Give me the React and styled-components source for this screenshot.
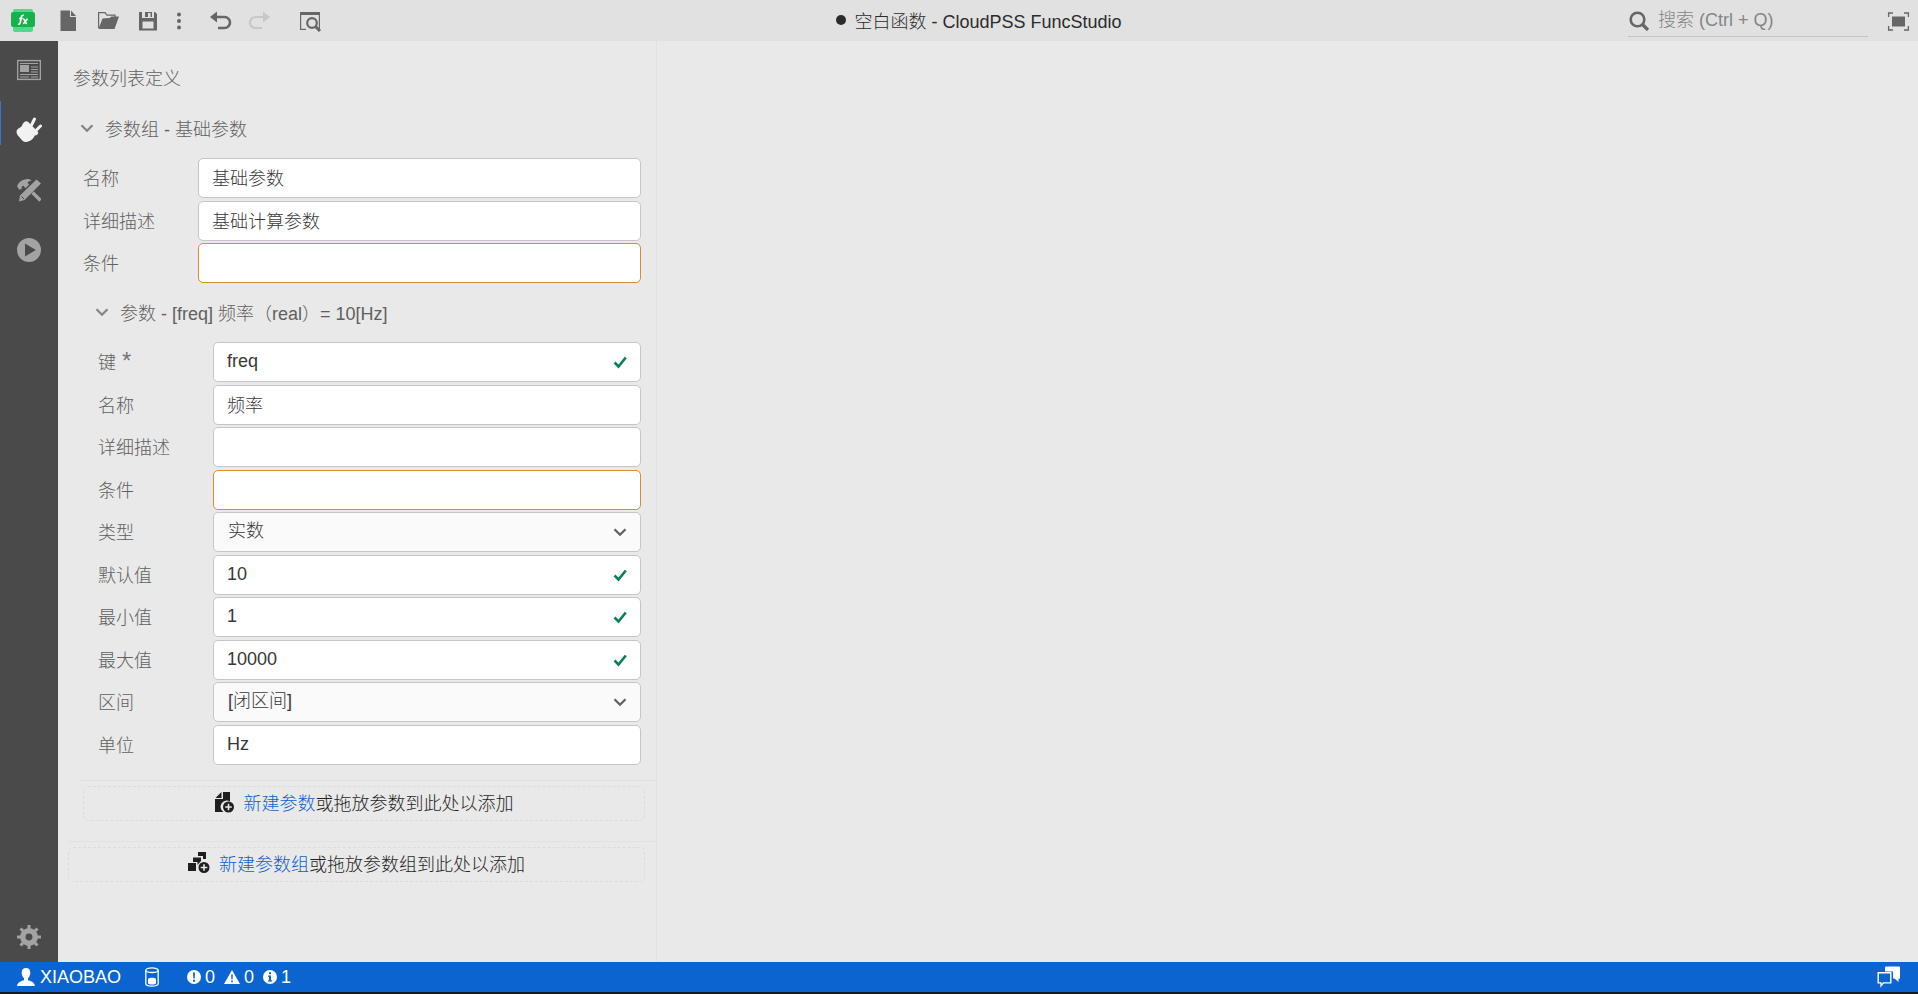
import React, { useState } from "react";
import styled, { createGlobalStyle } from "styled-components";

const groupFields = [
  { id: "g-name", label: "名称", value: "基础参数" },
  { id: "g-desc", label: "详细描述", value: "基础计算参数" },
  { id: "g-cond", label: "条件", value: "", warn: true },
];

const paramFields = [
  { id: "p-key", label: "键", value: "freq", required: true, valid: true },
  { id: "p-name", label: "名称", value: "频率" },
  { id: "p-desc", label: "详细描述", value: "" },
  { id: "p-cond", label: "条件", value: "", warn: true },
  { id: "p-type", label: "类型", value: "实数", options: ["实数", "整数", "文本"] },
  { id: "p-default", label: "默认值", value: "10", valid: true },
  { id: "p-min", label: "最小值", value: "1", valid: true },
  { id: "p-max", label: "最大值", value: "10000", valid: true },
  { id: "p-range", label: "区间", value: "[闭区间]", options: ["[闭区间]", "(开区间)"] },
  { id: "p-unit", label: "单位", value: "Hz" },
];

const Icon = ({ w = 24, h = 24, children }) => (
  <svg width={w} height={h} viewBox={`0 0 ${w} ${h}`} fill="currentColor" aria-hidden="true">
    {children}
  </svg>
);

const Logo = () => (
  <Icon>
    <rect x="2" y="0" width="20" height="23" rx="2" fill="#4fd98a" />
    <rect x="0" y="3" width="24" height="15" rx="2" fill="#17b24c" />
    <path
      d="M7 15.2c1.5.3 2-.6 2.3-2l1-5c.3-1.5 1-2.2 2.500-1.9M8 9.500h3.700M12.300 10.200c1.700-.3 1.500 4.600 3.900 4.300M16.700 10.200c-1.700 0-2.700 4.300-4.700 4.300"
      fill="none"
      stroke="#fff"
      strokeWidth="1.7"
    />
  </Icon>
);

const FileIcon = () => (
  <Icon>
    <path d="M4.500 1.500H14v6.500h6v14H4.500z" />
    <path d="M15 1.500l5 5.500h-5z" />
  </Icon>
);

const FolderIcon = () => (
  <Icon>
    <path d="M2.600 19V3.600H9l2 2.500h8V9" fill="none" stroke="currentColor" strokeWidth="1.200" />
    <path d="M6.500 9.500l7-.5 2-1.500H23L18.500 20h-16z" />
  </Icon>
);

const SaveIcon = () => (
  <Icon>
    <path
      fillRule="evenodd"
      d="M3 3h3v6h12V3h1l2 2v16.500H3zM6.500 12.500v7h11v-7zM9 3h7v5h-1.500V4H12v4H9z"
    />
  </Icon>
);

const MoreIcon = () => (
  <Icon w={6} h={24}>
    <circle cx="3" cy="5.500" r="2" />
    <circle cx="3" cy="12" r="2" />
    <circle cx="3" cy="18.500" r="2" />
  </Icon>
);

const UndoIcon = () => (
  <Icon>
    <path d="M6 8h10.500a4.800 4.800 0 0 1 0 11H10" fill="none" stroke="currentColor" strokeWidth="2.600" />
    <path d="M2 8l7-5.500v11z" />
  </Icon>
);

const RedoIcon = () => (
  <Icon>
    <path d="M18 8H7.500a4.800 4.800 0 0 0 0 11H14" fill="none" stroke="currentColor" strokeWidth="2.200" />
    <path d="M22 8l-7-5.500v11z" />
  </Icon>
);

const PreviewIcon = () => (
  <Icon>
    <path d="M2 3h20v3H2z" />
    <path d="M2.600 5v15.400H8M21.400 5v15" fill="none" stroke="currentColor" strokeWidth="1.200" />
    <circle cx="14" cy="14" r="4.800" fill="none" stroke="currentColor" strokeWidth="2.200" />
    <path d="M17.500 17.500l4.500 4.500" stroke="currentColor" strokeWidth="3" />
  </Icon>
);

const SearchIcon = () => (
  <Icon w={22} h={22}>
    <circle cx="9.500" cy="10.500" r="6.800" fill="none" stroke="currentColor" strokeWidth="2.600" />
    <path d="M14.500 15.500l5.500 5.500" stroke="currentColor" strokeWidth="3.200" />
  </Icon>
);

const FullscreenIcon = () => (
  <Icon>
    <path d="M6 7.500h13v10H6z" />
    <path d="M2.600 8V4H7M18 4h4.400v4M2.600 17v4H7M18 21h4.400v-4" fill="none" stroke="currentColor" strokeWidth="1.300" />
  </Icon>
);

const ArticleIcon = () => (
  <Icon>
    <rect x="0.600" y="2.600" width="22.800" height="18.800" fill="none" stroke="currentColor" strokeWidth="1.400" />
    <path d="M3 7h9v7H3z" />
    <path d="M3 5.500h18M14 9h7M14 11.500h7M14 14h7M3 16.500h18M3 19h9M14 19h7" stroke="currentColor" strokeWidth="1.200" />
  </Icon>
);

const PlugIcon = () => (
  <Icon w={26} h={26}>
    <path d="M15.500 8L18.500 2M20 13.500l4.500-4.500" stroke="currentColor" strokeWidth="3" strokeLinecap="round" />
    <path d="M7 6.500Q9.500 3 12 4.800L22 15q.8 2.500-1.800 3.300l-1.400.2Q16.500 23.500 12 24.500q-3 1.500-5.500-.8L1.500 18Q-.5 14.500 1.500 12.300L5.500 9.500z" />
  </Icon>
);

const ToolsIcon = () => (
  <Icon>
    <path d="M2 23.500l1-6L19.500 1.500 24 5.500 7.500 22z" />
    <path d="M4.200 18.300l2.800 2.700" stroke="#4a4a4a" strokeWidth="1" />
    <path d="M0 8c2-4.500 6-7 12-7l3 1.500c-2.500.3-3.500 1-4.500 2.200l1.500 2-3.500 3.500-2-2.500c-1.500.3-1.800 1-1.800 3l-2.500 1z" />
    <path d="M15.500 14.500L23.500 22.500" stroke="currentColor" strokeWidth="3.400" />
  </Icon>
);

const PlayIcon = () => (
  <Icon>
    <path fillRule="evenodd" d="M12 0a12 12 0 1 1 0 24a12 12 0 0 1 0-24zM8 5.500v13L18.800 12z" />
  </Icon>
);

const GearIcon = () => (
  <Icon>
    <circle cx="12" cy="12" r="6.200" fill="none" stroke="currentColor" strokeWidth="5.500" />
    {[0, 45, 90, 135, 180, 225, 270, 315].map((a) => (
      <path key={a} d="M10.500 4V0h3v4z" transform={`rotate(${a} 12 12)`} />
    ))}
  </Icon>
);

const Chevron = () => (
  <Icon w={14} h={14}>
    <path d="M1.500 4.200L7 9.700l5.500-5.500" fill="none" stroke="currentColor" strokeWidth="2.300" />
  </Icon>
);

const CheckIcon = () => (
  <Icon w={14} h={14}>
    <path d="M1.500 7.500l4 4L12.800 2.500" fill="none" stroke="#0b7f56" strokeWidth="2.600" />
  </Icon>
);

const AddParamIcon = () => (
  <Icon w={20} h={22}>
    <path d="M8 1h7v9.500a6 6 0 0 0-6.500 10.500H0V8h8z" />
    <path d="M.5 7L6.500 1v6z" />
    <path fillRule="evenodd" d="M13.500 10.500a5.500 5.500 0 1 1 0 11a5.500 5.500 0 0 1 0-11zM12.700 12.800v2.500h-2.500v1.500h2.500v2.500h1.600v-2.500h2.500v-1.500h-2.500v-2.500z" />
  </Icon>
);

const AddGroupIcon = () => (
  <Icon w={22} h={22}>
    <path d="M0 11h8v8H0zM10 0h8v7h-3V4h-5zM5 5.500h8v3.500l-3.500 4V10H5z" />
    <path fillRule="evenodd" d="M16 10a5.500 5.500 0 1 1 0 11a5.500 5.500 0 0 1 0-11zM15.200 12.300v2.500h-2.500v1.500h2.500v2.500h1.600v-2.500h2.500v-1.500h-2.500v-2.500z" />
  </Icon>
);

const UserIcon = () => (
  <Icon w={18} h={18}>
    <path d="M9 0c3 0 4.300 2 4.300 4.800 0 2.500-1 4.400-2.300 5.400v2c3 .8 6.500 2 7 5.800H0c.5-3.800 4-5 7-5.800v-2C5.700 9.200 4.700 7.300 4.700 4.800 4.700 2 6 0 9 0z" />
  </Icon>
);

const StorageIcon = () => (
  <Icon w={14} h={20}>
    <path d="M.8 3.200v13.600c0 1.300 2.800 2.400 6.200 2.400s6.200-1.100 6.200-2.400V3.200" fill="none" stroke="currentColor" strokeWidth="1.300" />
    <ellipse cx="7" cy="3.200" rx="6.200" ry="2.300" fill="none" stroke="currentColor" strokeWidth="1.300" />
    <path d="M3 12.200c0-2 8-2 8 0v4c0 1.800-8 1.800-8 0z" />
  </Icon>
);

const ErrorIcon = () => (
  <Icon w={14} h={14}>
    <path fillRule="evenodd" d="M7 0a7 7 0 1 1 0 14a7 7 0 0 1 0-14zM6 2.500l.3 6h1.400l.3-6zM6 9.700v2h2v-2z" />
  </Icon>
);

const WarnIcon = () => (
  <Icon w={16} h={14}>
    <path fillRule="evenodd" d="M8 0l8 14H0zM7.200 4.500l.2 5h1.200l.2-5zM7.200 10.500v1.700h1.600v-1.700z" />
  </Icon>
);

const InfoIcon = () => (
  <Icon w={14} h={14}>
    <path fillRule="evenodd" d="M7 0a7 7 0 1 1 0 14a7 7 0 0 1 0-14zM6 2.300v2h2v-2zM5 5.500v1.200h1v3.600H5v1.200h4v-1.200H8V5.500z" />
  </Icon>
);

const ChatIcon = () => (
  <Icon w={24} h={22}>
    <path d="M8 1.500q0-1 1-1h13q1 0 1 1V12q0 1-1 1h-.5v3l-4-3.500H16V5.500H8z" />
    <path d="M1.200 6.700h12.600v10.200H6.500l-2.500 3v-3H1.200z" fill="none" stroke="currentColor" strokeWidth="1.400" />
  </Icon>
);

const Field = ({ field }) => {
  const [value, setValue] = useState(field.value);
  const onChange = (e) => setValue(e.target.value);

  return (
    <FieldRow>
      <Label htmlFor={field.id}>
        {field.label}
        {field.required && <Required>*</Required>}
      </Label>
      <Control>
        {field.options ? (
          <Select id={field.id} value={value} onChange={onChange}>
            {field.options.map((o) => (
              <option key={o}>{o}</option>
            ))}
          </Select>
        ) : (
          <Input id={field.id} value={value} onChange={onChange} $warn={field.warn} />
        )}
        <ControlIcon>
          {field.options && <Chevron />}
          {field.valid && <CheckIcon />}
        </ControlIcon>
      </Control>
    </FieldRow>
  );
};

const App = () => {
  const [tab, setTab] = useState(1);
  const tabs = [
    { name: "摘要", icon: <ArticleIcon /> },
    { name: "接口", icon: <PlugIcon /> },
    { name: "实现", icon: <ToolsIcon /> },
    { name: "运行", icon: <PlayIcon /> },
  ];

  return (
    <Page>
      <GlobalStyle />
      <Header>
        <LogoLink href="#" aria-label="CloudPSS"><Logo /></LogoLink>
        <Tools>
          <ToolButton aria-label="新建"><FileIcon /></ToolButton>
          <ToolButton aria-label="打开"><FolderIcon /></ToolButton>
          <ToolButton aria-label="保存"><SaveIcon /></ToolButton>
          <ToolButton aria-label="更多" $narrow><MoreIcon /></ToolButton>
        </Tools>
        <Tools>
          <ToolButton aria-label="撤销"><UndoIcon /></ToolButton>
          <ToolButton aria-label="重做" disabled><RedoIcon /></ToolButton>
        </Tools>
        <ToolButton aria-label="预览"><PreviewIcon /></ToolButton>
        <Title><Dot />空白函数 - CloudPSS FuncStudio</Title>
        <Search>
          <SearchIcon />
          <SearchInput type="search" aria-label="搜索" placeholder="搜索 (Ctrl + Q)" />
        </Search>
        <ToolButton aria-label="全屏"><FullscreenIcon /></ToolButton>
      </Header>

      <Body>
        <Sidebar>
          {tabs.map((t, i) => (
            <SideButton key={t.name} aria-label={t.name} $active={tab === i} onClick={() => setTab(i)}>
              {t.icon}
            </SideButton>
          ))}
          <SideSpacer />
          <SideButton aria-label="设置" $small><GearIcon /></SideButton>
        </Sidebar>

        <Panel>
          <PanelTitle>参数列表定义</PanelTitle>
          <Group>
            <GroupHeader aria-expanded="true"><Chevron />参数组 - 基础参数</GroupHeader>
            <Fields>
              {groupFields.map((f) => <Field key={f.id} field={f} />)}
            </Fields>
            <Param>
              <GroupHeader aria-expanded="true"><Chevron />参数 - [freq] 频率（real）= 10[Hz]</GroupHeader>
              <Fields>
                {paramFields.map((f) => <Field key={f.id} field={f} />)}
              </Fields>
            </Param>
            <AddArea>
              <DropZone $inset>
                <AddParamIcon />
                <span><AddLink href="#">新建参数</AddLink>或拖放参数到此处以添加</span>
              </DropZone>
            </AddArea>
          </Group>
          <AddArea>
            <DropZone>
              <AddGroupIcon />
              <span><AddLink href="#">新建参数组</AddLink>或拖放参数组到此处以添加</span>
            </DropZone>
          </AddArea>
        </Panel>
        <Workspace />
      </Body>

      <StatusBar>
        <StatusButton><UserIcon />XIAOBAO</StatusButton>
        <StatusButton aria-label="存储"><StorageIcon /></StatusButton>
        <Messages>
          <ErrorIcon />0
          <WarnIcon />0
          <InfoIcon />1
        </Messages>
        <StatusButton aria-label="反馈"><ChatIcon /></StatusButton>
      </StatusBar>
    </Page>
  );
};

const GlobalStyle = createGlobalStyle`
  * {
    box-sizing: border-box;
  }
  body {
    margin: 0;
    background: #e9e9e9;
  }
  body, button, input, select {
    font-family: "Liberation Sans", "Noto Sans CJK SC", sans-serif;
    font-size: 18px;
    font-weight: 300;
  }
  button {
    border: none;
    background: none;
    padding: 0;
    color: inherit;
    cursor: pointer;
  }
  svg {
    display: block;
    flex: none;
  }
`;

const Page = styled.div`
  min-height: 100vh;
  display: flex;
  flex-direction: column;
`;

const Header = styled.header`
  height: 41px;
  display: flex;
  align-items: center;
  background: #e1e1e1;
  color: #666;
`;

const LogoLink = styled.a`
  width: 48px;
  padding-left: 11px;
`;

const Tools = styled.div`
  display: flex;
  margin-right: 10px;
`;

const ToolButton = styled.button`
  width: ${(props) => (props.$narrow ? "22px" : "40px")};
  height: 40px;
  display: flex;
  align-items: center;
  justify-content: center;

  &:disabled {
    color: #c8c8c8;
    cursor: default;
  }
`;

const Title = styled.h1`
  flex: 1;
  margin: 0;
  padding-bottom: 2px;
  display: flex;
  align-items: center;
  justify-content: center;
  gap: 8px;
  font-size: 18px;
  font-weight: 300;
  color: #2b2b2b;
`;

const Dot = styled.span`
  width: 10px;
  height: 10px;
  border-radius: 50%;
  background: #2b2b2b;
`;

const Search = styled.label`
  width: 240px;
  height: 32px;
  margin-right: 10px;
  display: flex;
  align-items: center;
  gap: 8px;
  border-bottom: 1px solid #c4c4c4;
`;

const SearchInput = styled.input`
  flex: 1;
  min-width: 0;
  padding: 0;
  border: none;
  outline: none;
  background: none;

  &::placeholder {
    color: #858585;
  }
`;

const Body = styled.div`
  flex: 1;
  display: flex;
`;

const Sidebar = styled.nav`
  width: 58px;
  display: flex;
  flex-direction: column;
  background: #4a4a4a;
`;

const SideButton = styled.button`
  position: relative;
  height: ${(props) => (props.$small ? "48px" : "60px")};
  padding-bottom: 2px;
  display: flex;
  align-items: center;
  justify-content: center;
  color: ${(props) => (props.$active ? "#f2f2f2" : "#a3a3a3")};

  &::before {
    content: "";
    display: ${(props) => (props.$active ? "block" : "none")};
    position: absolute;
    left: 0;
    top: 0;
    width: 1px;
    height: 44px;
    background: #3b76c4;
  }
`;

const SideSpacer = styled.div`
  flex: 1;
`;

const Panel = styled.main`
  width: 599px;
  padding: 20px 0 0 10px;
  border-right: 1px solid #e2e2e2;
  color: #606060;
`;

const PanelTitle = styled.h2`
  margin: 0 0 14px;
  padding-left: 5px;
  font-size: 18px;
  font-weight: 300;
  line-height: 36px;
`;

const Group = styled.section`
  padding-left: 12px;
`;

const GroupHeader = styled.button`
  width: 100%;
  height: 36px;
  margin-bottom: 11px;
  padding-bottom: 2px;
  display: flex;
  align-items: center;
  gap: 11px;

  svg {
    color: #858585;
  }
`;

const Fields = styled.div`
  padding: 0 15px 0 3px;
`;

const FieldRow = styled.div`
  display: flex;
  align-items: center;
  margin-bottom: 2px;

  &:nth-child(odd) {
    margin-bottom: 3px;
  }
`;

const Label = styled.label`
  width: 115px;
  padding-bottom: 3px;
`;

const Required = styled.span`
  margin-left: 6px;
  font-size: 24px;
  line-height: 0;
  color: #777;
`;

const Control = styled.div`
  flex: 1;
  position: relative;
`;

const Input = styled.input`
  display: block;
  width: 100%;
  height: 40px;
  padding: 0 13px 2px;
  border: 1px solid ${(props) => (props.$warn ? "#d98e2b" : "#c6c6c6")};
  border-radius: 5px;
  outline: none;
  background: #fff;
  color: #383838;
`;

const Select = styled.select`
  display: block;
  width: 100%;
  height: 40px;
  padding: 0 14px 2px;
  appearance: none;
  border: 1px solid #c6c6c6;
  border-radius: 5px;
  background: #fafafa;
  color: #383838;
`;

const ControlIcon = styled.span`
  position: absolute;
  top: 13px;
  right: 14px;
  pointer-events: none;
`;

const Param = styled.section`
  padding: 9px 0 13px 15px;
`;

const AddArea = styled.div`
  padding: 5px 11px 20px 0;
  border-top: 1px solid #e1e1e1;
`;

const DropZone = styled.div`
  height: 35px;
  margin-left: ${(props) => (props.$inset ? "3px" : "0")};
  display: flex;
  align-items: center;
  justify-content: center;
  gap: 9px;
  padding-bottom: 3px;
  border: 1px dashed #dcdcdc;
  border-radius: 5px;
  color: #1f1f1f;
`;

const AddLink = styled.a`
  color: #0b5fd0;
  text-decoration: none;
`;

const Workspace = styled.div`
  flex: 1;
`;

const StatusBar = styled.footer`
  height: 32px;
  padding: 0 17px;
  display: flex;
  align-items: center;
  gap: 24px;
  border-bottom: 2px solid #171a1c;
  background: #0b64d0;
  color: #fff;
`;

const StatusButton = styled.button`
  display: flex;
  align-items: center;
  gap: 5px;
`;

const Messages = styled.div`
  flex: 1;
  margin-left: 4px;
  display: flex;
  align-items: center;
  gap: 4px;

  svg:not(:first-child) {
    margin-left: 5px;
  }
`;

export default App;
